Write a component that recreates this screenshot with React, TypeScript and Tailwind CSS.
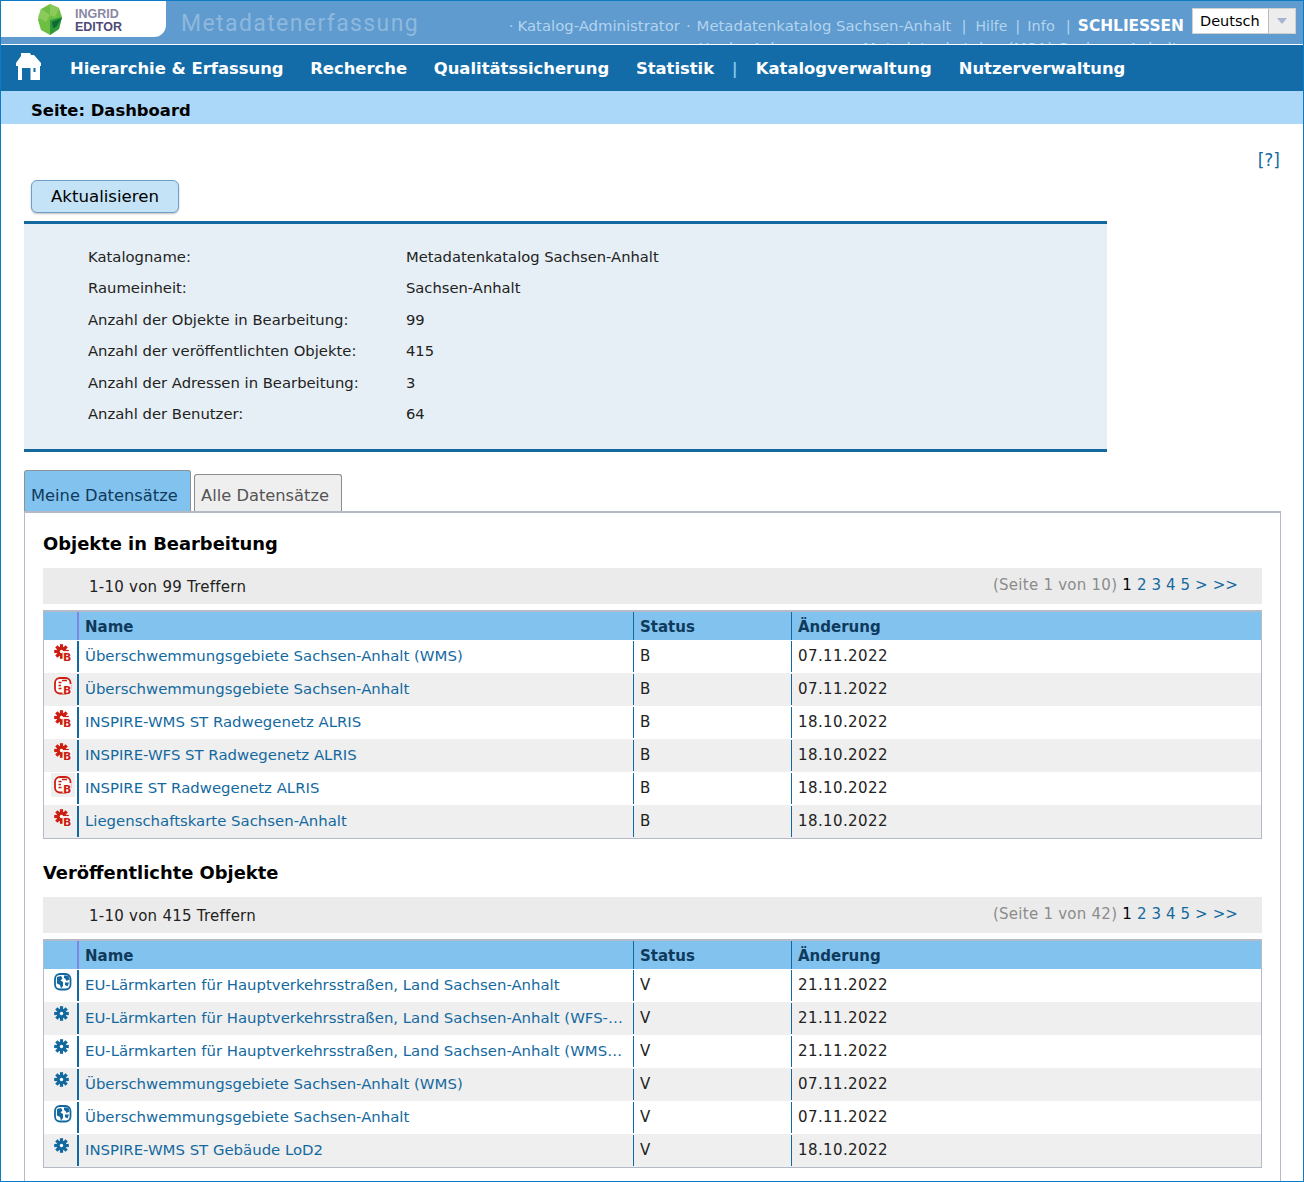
const navLeft = ['Hierarchie & Erfassung', 'Recherche', 'Qualitätssicherung', 'Statistik']
const navRight = ['Katalogverwaltung', 'Nutzerverwaltung']

const catalogInfo = [
  ['Katalogname:', 'Metadatenkatalog Sachsen-Anhalt'],
  ['Raumeinheit:', 'Sachsen-Anhalt'],
  ['Anzahl der Objekte in Bearbeitung:', '99'],
  ['Anzahl der veröffentlichten Objekte:', '415'],
  ['Anzahl der Adressen in Bearbeitung:', '3'],
  ['Anzahl der Benutzer:', '64'],
]

type Row = { icon: 'gear' | 'globe'; name: string; date: string; tint?: boolean }

const inWork: Row[] = [
  { icon: 'gear', name: 'Überschwemmungsgebiete Sachsen-Anhalt (WMS)', date: '07.11.2022' },
  { icon: 'globe', name: 'Überschwemmungsgebiete Sachsen-Anhalt', date: '07.11.2022' },
  { icon: 'gear', name: 'INSPIRE-WMS ST Radwegenetz ALRIS', date: '18.10.2022' },
  { icon: 'gear', name: 'INSPIRE-WFS ST Radwegenetz ALRIS', date: '18.10.2022' },
  { icon: 'globe', name: 'INSPIRE ST Radwegenetz ALRIS', date: '18.10.2022', tint: true },
  { icon: 'gear', name: 'Liegenschaftskarte Sachsen-Anhalt', date: '18.10.2022' },
]

const published: Row[] = [
  { icon: 'globe', name: 'EU-Lärmkarten für Hauptverkehrsstraßen, Land Sachsen-Anhalt', date: '21.11.2022' },
  { icon: 'gear', name: 'EU-Lärmkarten für Hauptverkehrsstraßen, Land Sachsen-Anhalt (WFS-LSA)', date: '21.11.2022' },
  { icon: 'gear', name: 'EU-Lärmkarten für Hauptverkehrsstraßen, Land Sachsen-Anhalt (WMS-LSA)', date: '21.11.2022' },
  { icon: 'gear', name: 'Überschwemmungsgebiete Sachsen-Anhalt (WMS)', date: '07.11.2022' },
  { icon: 'globe', name: 'Überschwemmungsgebiete Sachsen-Anhalt', date: '07.11.2022' },
  { icon: 'gear', name: 'INSPIRE-WMS ST Gebäude LoD2', date: '18.10.2022' },
]

function GearShape({ color }: { color: string }) {
  return (
    <g fill={color}>
      <circle cx="7.5" cy="7.5" r="4.8" />
      {[0, 45, 90, 135].map((a) => (
        <rect key={a} x="5.9" y="0.2" width="3.2" height="14.6" transform={`rotate(${a} 7.5 7.5)`} />
      ))}
      <circle cx="7.5" cy="7.5" r="1.7" fill="#ffffff" />
    </g>
  )
}

function StatusIcon({ kind, color, badge }: { kind: 'gear' | 'globe'; color: string; badge: boolean }) {
  return (
    <svg width="18" height="18" viewBox="0 0 18 18" className="block">
      {kind === 'gear' ? (
        <GearShape color={color} />
      ) : (
        <g>
          <rect x="1" y="1" width="15.5" height="15.5" rx="5" fill="#ffffff" stroke={color} strokeWidth="1.8" />
          {badge ? (
            <path d="M4.5 5.5h3M4.5 8.5h2.5M4.5 11.5h3M8 3.5h5" stroke={color} strokeWidth="1.5" fill="none" />
          ) : (
            <g fill={color}>
              <path d="M3 4l4-1 1.5 2.5-2 2 2.5 1.5L9 13l-2 2.5L6 12 3 10.5z" />
              <path d="M10 2.5h4.5l1 4-3 1.5-1-2-1.5-1zM11 9.5h4l-1.5 4L11 12z" />
            </g>
          )}
        </g>
      )}
      {badge && (
        <g>
          <rect x="8.5" y="7" width="9" height="10" fill="#ffffff" opacity="0.9" />
          <text x="9" y="16.5" fontSize="11" fontWeight="700" fill={color} fontFamily="'DejaVu Sans', sans-serif">B</text>
        </g>
      )}
    </svg>
  )
}

function Pager({ total }: { total: number }) {
  return (
    <div className="flex justify-between h-[36px] bg-[#ebebeb] pl-[46px] pr-[24px]">
      <span className="pt-[10px] text-[#222] tracking-[0.25px]">1-10 von {total} Treffern</span>
      <span className="pt-[8px] text-[#8c8c8c] tracking-[0.25px]">
        (Seite 1 von {total === 99 ? 10 : 42}) <span className="text-black">1</span>{' '}
        <span className="text-[#13699f] tracking-[0.1px]">2 3 4 5 &gt; &gt;&gt;</span>
      </span>
    </div>
  )
}

function ResultTable({ rows, state, color, badge }: { rows: Row[]; state: string; color: string; badge: boolean }) {
  return (
    <div className="mt-[6px] border-x border-t-2 border-b border-[#b5bac8]">
      <div className="grid grid-cols-[35px_555px_158px_1fr] h-[28px] bg-[#82c2ee] font-bold text-[#0f3a5c]">
        <div className="border-r-2 border-[#7f86e0]" />
        <div className="border-r border-[#13699f] pl-[6px] pt-[6px]">Name</div>
        <div className="border-r border-[#13699f] pl-[6px] pt-[6px]">Status</div>
        <div className="pl-[6px] pt-[6px]">Änderung</div>
      </div>
      {rows.map((r, i) => (
        <div key={i} className={`grid grid-cols-[35px_555px_158px_1fr] h-[33px] items-stretch ${i % 2 ? 'bg-[#efefef]' : 'bg-white'}`}>
          <div className="border-r-2 border-[#13699f] my-[1px] flex justify-start">
            <div className={`ml-[7px] w-[24px] h-[24px] pl-[3px] pt-[3px] ${r.tint ? 'bg-[#efefef]' : ''}`}>
              <StatusIcon kind={r.icon} color={color} badge={badge} />
            </div>
          </div>
          <div className="border-r border-[#13699f] my-[1px] pl-[6px] pr-[6px] pt-[6px] text-[#13699f] text-[14.9px] truncate">{r.name}</div>
          <div className="border-r border-[#13699f] my-[1px] pl-[6px] pt-[6px] text-[#222]">{state}</div>
          <div className="pl-[6px] pt-[7px] text-[#222] tracking-[0.4px]">{r.date}</div>
        </div>
      ))}
    </div>
  )
}

export default function App() {
  return (
    <div className="w-[1304px] h-[1182px] overflow-hidden border border-[#0b7cc4] bg-white text-[15px] leading-[18px] font-['DejaVu_Sans','Verdana',sans-serif]">
      {/* top bar */}
      <div className="flex h-[43px] overflow-hidden bg-[#5f9bcf] border-b border-white box-content">
        <div className="relative w-[165px] h-[36px] bg-white rounded-br-[12px] shrink-0">
          <svg width="26" height="32" viewBox="0 0 26 32" className="absolute left-[36px] top-[3px]">
            <path d="M13 0l9 4 3 9-3 12-9 6-9-5-3-10L4 5z" fill="#6fbe44" />
            <path d="M13 0l9 4-4 9-5-2zM4 5l9 6-4 7-8-5z" fill="#8ccb5b" />
            <path d="M13 16l12-3-3 12-9 6z" fill="#2f9a3d" />
            <path d="M15 18l10-4-6 9-3 1z" fill="#0c6a34" />
          </svg>
          <div className="absolute left-[74px] top-[7px] text-[12.5px] leading-[13px] font-bold font-['Liberation_Sans',sans-serif]">
            <div className="text-[#8a87a5]">INGRID</div>
            <div className="text-[#4f4a78]">EDITOR</div>
          </div>
        </div>
        <div className="ml-[15px] mt-[8px] text-[23px] leading-[30px] tracking-[1.4px] text-[#8eb8dd] font-['Roboto',sans-serif] shrink-0">
          Metadatenerfassung
        </div>
        <div className="ml-auto flex flex-col items-end pr-[7px] text-[#b3d4ee] text-[14.85px]">
          <div className="flex items-start pt-[7px]">
            <div className="flex pt-[9px] whitespace-nowrap">
              <span>·</span>
              <span className="ml-[4px]">Katalog-Administrator</span>
              <span className="ml-[6px]">·</span>
              <span className="ml-[6px]">Metadatenkatalog Sachsen-Anhalt</span>
              <span className="ml-[10px]">|</span>
              <span className="ml-[9px] text-[14px]">Hilfe</span>
              <span className="ml-[8px]">|</span>
              <span className="ml-[7px] text-[14.5px]">Info</span>
              <span className="ml-[11px]">|</span>
              <span className="ml-[7px] font-bold text-white text-[15.4px]">SCHLIESSEN</span>
            </div>
            <div className="ml-[8px] flex h-[26px] w-[104px] bg-white border border-[#d0d0d0] text-black text-[14.5px]">
              <span className="flex-1 pl-[7px] pt-[3px]">Deutsch</span>
              <span className="w-[27px] bg-[#ededed] border-l border-[#bbb] flex items-center justify-center">
                <span className="w-0 h-0 border-x-[5px] border-x-transparent border-t-[6px] border-t-[#a6b4cf]" />
              </span>
            </div>
          </div>
          <div className="pt-[4px] pr-[118px] whitespace-nowrap tracking-[0.3px]">Hauke Ackermann &nbsp;· &nbsp;Metadatenkatalog (MSA) Sachsen-Anhalt</div>
        </div>
      </div>

      {/* main nav */}
      <div className="flex items-center h-[46px] pt-[1px] bg-[#136ca8] text-white font-bold text-[16.4px]">
        <svg width="26" height="28" viewBox="0 0 26 28" className="ml-[15px] mr-[28px] mb-[4px]" fill="#ffffff">
          <path d="M5 0H14L15 2H18L25 10V13H24V27H14.5V15H6V27H2V13H0V10L5 3Z" />
          <rect x="17.5" y="15" width="2" height="4" fill="#136ca8" />
        </svg>
        <div className="flex">
          {navLeft.map((n) => (
            <span key={n} className="mr-[26.7px] whitespace-nowrap">{n}</span>
          ))}
        </div>
        <span className="font-bold text-[#82c2ee] -ml-[9px] mr-[18px]">|</span>
        <div className="flex">
          {navRight.map((n) => (
            <span key={n} className="mr-[27px] whitespace-nowrap">{n}</span>
          ))}
        </div>
      </div>

      {/* page title */}
      <div className="h-[33px] bg-[#abd7f9] pl-[30px] pt-[11px] font-bold text-[16.4px] text-black">Seite: Dashboard</div>

      {/* content */}
      <div className="relative pl-[23px] pr-[22px]">
        <div className="flex justify-end pt-[27px] h-[56px] pr-[1px] text-[#13699f] text-[17px]">[?]</div>
        <button className="ml-[7px] block w-[148px] h-[33px] rounded-[6px] border border-[#6f9fc9] bg-[#c5e3f7] text-black text-[16.6px] shadow-[0_1px_2px_rgba(0,0,0,0.25)]">
          Aktualisieren
        </button>

        <div className="mt-[8px] w-[1083px] h-[231px] bg-[#e6eff5] border-y-[3px] border-[#13699f] pl-[64px] pt-[24px] text-[#222] text-[14.8px]">
          {catalogInfo.map(([k, v]) => (
            <div key={k} className="flex h-[31.4px]">
              <span className="w-[318px]">{k}</span>
              <span className="text-[14.72px]">{v}</span>
            </div>
          ))}
        </div>

        {/* tabs */}
        <div className="flex items-end mt-[18px] h-[41px] text-[16.3px]">
          <div className="h-[41px] w-[167px] bg-[#82c2ee] border border-[#8c9196] border-b-0 rounded-t-[3px] pl-[6px] pt-[16px] text-[#0f3a5c]">Meine Datensätze</div>
          <div className="ml-[3px] h-[37px] w-[148px] bg-[#efefef] border border-[#8c8c8c] border-b-0 rounded-t-[3px] pl-[6px] pt-[12px] text-[#555]">Alle Datensätze</div>
        </div>

        <div className="w-[1257px] border-t-2 border-l border-r border-[#b5bac8] px-[18px] pb-[20px]">
          <h2 className="pt-[22px] h-[55px] font-bold text-[17.9px] text-black">Objekte in Bearbeitung</h2>
          <Pager total={99} />
          <ResultTable rows={inWork} state="B" color="#cc1f12" badge />
          <h2 className="pt-[25px] h-[58px] font-bold text-[17.9px] text-black">Veröffentlichte Objekte</h2>
          <Pager total={415} />
          <ResultTable rows={published} state="V" color="#13699f" badge={false} />
        </div>
      </div>
    </div>
  )
}
